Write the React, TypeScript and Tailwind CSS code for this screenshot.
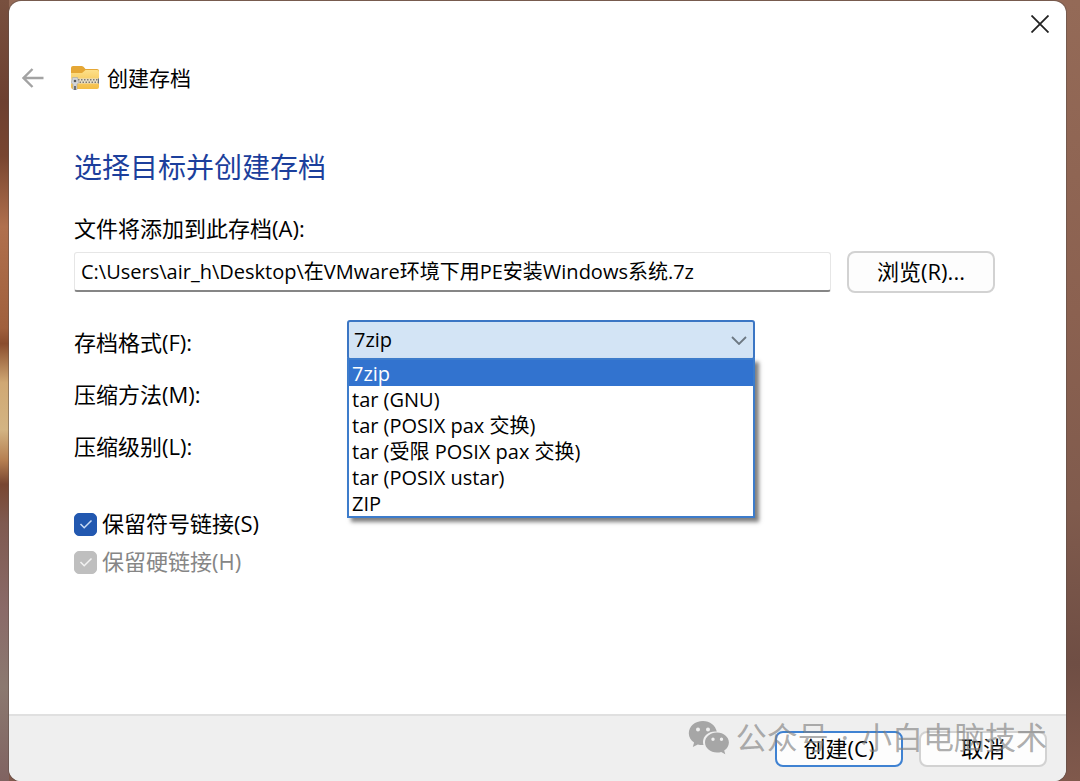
import React, { useState } from 'react';

const formats = [
  '7zip',
  'tar (GNU)',
  'tar (POSIX pax 交换)',
  'tar (受限 POSIX pax 交换)',
  'tar (POSIX ustar)',
  'ZIP',
];

function FolderIcon() {
  return (
    <svg className="h-[26px] w-[30px]" viewBox="0 0 30 26" aria-hidden="true">
      <defs>
        <linearGradient id="folder" x1="0" y1="0" x2="0" y2="1">
          <stop offset="0" stopColor="#fde08a" />
          <stop offset="1" stopColor="#f3bd45" />
        </linearGradient>
      </defs>
      <path d="M1 3a2 2 0 0 1 2-2h8.500a3 3 0 0 1 2 .8L15.500 4H27a2 2 0 0 1 2 2v10H1z" fill="#e5a735" />
      <path d="M1 8h11l3.500-3H27a2 2 0 0 1 2 2v15a2 2 0 0 1-2 2H3a2 2 0 0 1-2-2z" fill="url(#folder)" />
      <path d="M1 13.500h28v5H1z" fill="#e9e0c8" />
      <path d="M2 14.700h27M3.500 17.300h25" stroke="#7d7870" strokeWidth="1.500" strokeDasharray="1.500 1.500" />
      <path d="M28 13.500h1v5h-1z" fill="#68727e" />
      <path d="M2.500 12.500h5l1 5-1.500 2v5h-4v-5l-1.500-2z" fill="#d3d5d7" stroke="#a3a5a7" strokeWidth=".6" />
      <circle cx="5" cy="16" r="1.300" fill="#55585c" />
      <path d="M4 21h2v4H4z" fill="#6d6f72" />
    </svg>
  );
}

function WechatIcon() {
  return (
    <svg className="h-[35px] w-[42px]" viewBox="0 0 42 35" fill="#a6a6a6" aria-hidden="true">
      <path
        fillRule="evenodd"
        d="M15 1C7 1 .8 6.400.8 13.200c0 3.900 2 7.200 5.300 9.400l-1.300 4.400 5-2.600c1.800.6 3.400.8 5.700.7-.4-1-.5-2-.5-3C15 16 20.500 11.500 27 11.500c.6 0 1.200 0 1.800.1C27.500 5.500 21.900 1 15 1zM10 7.500a2 2 0 1 1 0 4 2 2 0 0 1 0-4zm10 0a2 2 0 1 1 0 4 2 2 0 0 1 0-4z"
      />
      <path
        fillRule="evenodd"
        d="M29 12.500c-6.700 0-12 4.500-12 10s5.300 10 12 10c1.500 0 2.900-.2 4.200-.6l4.100 2.300-1.100-3.700c2.900-1.900 4.700-4.700 4.700-8 0-5.500-5.300-10-11.900-10zM25 17.500a1.700 1.700 0 1 1 0 3.400 1.700 1.700 0 0 1 0-3.400zm8.500 0a1.700 1.700 0 1 1 0 3.400 1.700 1.700 0 0 1 0-3.400z"
      />
    </svg>
  );
}

type CheckProps = {
  id: string;
  label: string;
  disabled?: boolean;
};

function CheckRow({ id, label, disabled }: CheckProps) {
  return (
    <div className="flex h-[38px] items-center gap-[5px]">
      <span className="grid h-[23px] w-[23px] place-items-center">
        <input
          id={id}
          type="checkbox"
          defaultChecked
          disabled={disabled}
          className="peer col-start-1 row-start-1 h-[23px] w-[23px] appearance-none rounded-[5px] border border-gray-400 bg-white checked:border-[#2258b0] checked:bg-[#2258b0] disabled:border-[#bfbfbf] disabled:bg-[#bfbfbf]"
        />
        <svg
          className="pointer-events-none col-start-1 row-start-1 hidden h-[14px] w-[14px] peer-checked:block"
          viewBox="0 0 14 14"
          fill="none"
          stroke={disabled ? '#f3f3f3' : '#c9dbf5'}
          strokeWidth="1.500"
        >
          <path d="M1.500 7l3.700 3.700L12.500 3.500" />
        </svg>
      </span>
      <label htmlFor={id} className={disabled ? 'pb-[2px] text-[#868686]' : 'pb-[2px] text-black'}>
        {label}
      </label>
    </div>
  );
}

export default function App() {
  const [format, setFormat] = useState('7zip');

  return (
    <div className="flex min-h-screen bg-[linear-gradient(to_bottom,#946a57,#8b6150_40%,#805b4d_65%,#6f4e44_85%,#80594c)] pr-[14px] font-['Open_Sans','Noto_Sans_CJK_SC',sans-serif] text-[22px] leading-[26px] text-black">
      {/* Wallpaper strip on the left */}
      <div className="w-[9px] shrink-0 bg-[linear-gradient(to_bottom,#78503f,#6d4030_13%,#784530_20%,#b0704d_29%,#a0603d_42%,#8a4d2e_44%,#d0a873_49%,#d3b483_55%,#b57e50_59%,#784631_62%,#7f5a50_67%,#8a6a68_78%,#8b7970_88%,#806361)]" />

      <div className="mt-px flex min-w-0 flex-1 flex-col overflow-hidden rounded-[12px] bg-white shadow-[0_0_0_1px_rgba(90,75,70,0.5)]">
        <div className="flex justify-end pt-[11px] pr-[14px]">
          <button type="button" aria-label="关闭" className="grid h-6 w-6 place-items-center">
            <svg className="h-[18px] w-[18px]" viewBox="0 0 18 18" stroke="#222" strokeWidth="1.800">
              <path d="M.5.5l17 17M17.500.5l-17 17" />
            </svg>
          </button>
        </div>

        <header className="mt-[26px] flex h-8 items-center pl-[13px]">
          <button type="button" aria-label="返回" className="grid h-6 w-[22px] place-items-center">
            <svg className="h-5 w-[22px]" viewBox="0 0 22 20" fill="none" stroke="#a3a3a3" strokeWidth="2.400">
              <path d="M21.500 10H1.500M10.500 1l-9 9 9 9" />
            </svg>
          </button>
          <span className="ml-[26px]">
            <FolderIcon />
          </span>
          <span className="ml-[7px] text-[21px]">创建存档</span>
        </header>

        <main className="flex-1 pr-[71px] pl-[65px]">
          <h1 className="mt-[55px] text-[28px] leading-9 text-[#1c3f9c]">选择目标并创建存档</h1>

          <label htmlFor="path" className="mt-[30px] block">
            文件将添加到此存档(A):
          </label>
          <div className="mt-[10px] flex items-center gap-4">
            <input
              id="path"
              type="text"
              defaultValue="C:\Users\air_h\Desktop\在VMware环境下用PE安装Windows系统.7z"
              className="h-10 min-w-0 flex-1 rounded-[3px] border border-b-2 border-[#e6e6e6] border-b-[#868686] px-[6px] pb-[3px] text-[20px] outline-none"
            />
            <button type="button" className="h-[42px] w-[148px] rounded-[8px] border-2 border-[#d2d2d2] bg-[#fdfdfd] pb-[3px]">
              浏览(R)...
            </button>
          </div>

          <div className="mt-[24px] grid grid-cols-[272px_minmax(0,408px)] gap-x-px">
            <label htmlFor="format" className="flex h-[52px] items-center pb-[3px]">
              存档格式(F):
            </label>
            <div className="relative row-span-3">
              <select
                id="format"
                value={format}
                onChange={(e) => setFormat(e.target.value)}
                className="mt-[3px] block h-10 w-full appearance-none rounded-[3px] border-2 border-[#3b76c4] bg-[#d3e4f5] px-[5px] text-[20px] outline-none"
              >
                {formats.map((name) => (
                  <option key={name}>{name}</option>
                ))}
              </select>
              <svg
                className="pointer-events-none absolute top-[19px] right-2 h-[9px] w-4"
                viewBox="0 0 16 9"
                fill="none"
                stroke="#6d7882"
                strokeWidth="1.800"
              >
                <path d="M1 1l7 7 7-7" />
              </svg>
              <ul
                role="listbox"
                aria-label="存档格式"
                className="absolute inset-x-0 top-[41px] border-2 border-[#3d7ccb] bg-white text-[20px] leading-7 shadow-[4px_4px_4px_rgba(0,0,0,0.5)]"
              >
                {formats.map((name) => (
                  <li
                    key={name}
                    role="option"
                    aria-selected={name === format}
                    onClick={() => setFormat(name)}
                    className="h-[26px] px-[3px] whitespace-nowrap aria-selected:bg-[#3273cf] aria-selected:text-white"
                  >
                    {name}
                  </li>
                ))}
              </ul>
            </div>
            <span className="flex h-[52px] items-center pb-[3px]">压缩方法(M):</span>
            <span className="flex h-[52px] items-center pb-[3px]">压缩级别(L):</span>
          </div>

          <div className="mt-[32px]">
            <CheckRow id="symlinks" label="保留符号链接(S)" />
            <CheckRow id="hardlinks" label="保留硬链接(H)" disabled />
          </div>
        </main>

        <footer className="relative flex justify-end gap-4 border-t-2 border-[#e0e0e0] bg-[#efefef] pt-[15px] pr-[19px] pb-[14px]">
          <button type="button" className="h-9 w-32 rounded-[8px] border-2 border-[#3f82d2] bg-[#fdfdfd] pb-[2px]">
            创建(C)
          </button>
          <button type="button" className="h-9 w-32 rounded-[8px] border-2 border-[#d2d2d2] bg-[#fdfdfd] pb-[2px]">
            取消
          </button>
          <div className="pointer-events-none absolute top-px right-[19px] flex items-center gap-[6px]">
            <WechatIcon />
            <span className="flex gap-3 text-[31px] leading-10 whitespace-nowrap text-[#808080]/65">
              <span>公众号</span>
              <span>·</span>
              <span>小白电脑技术</span>
            </span>
          </div>
        </footer>
      </div>
    </div>
  );
}
